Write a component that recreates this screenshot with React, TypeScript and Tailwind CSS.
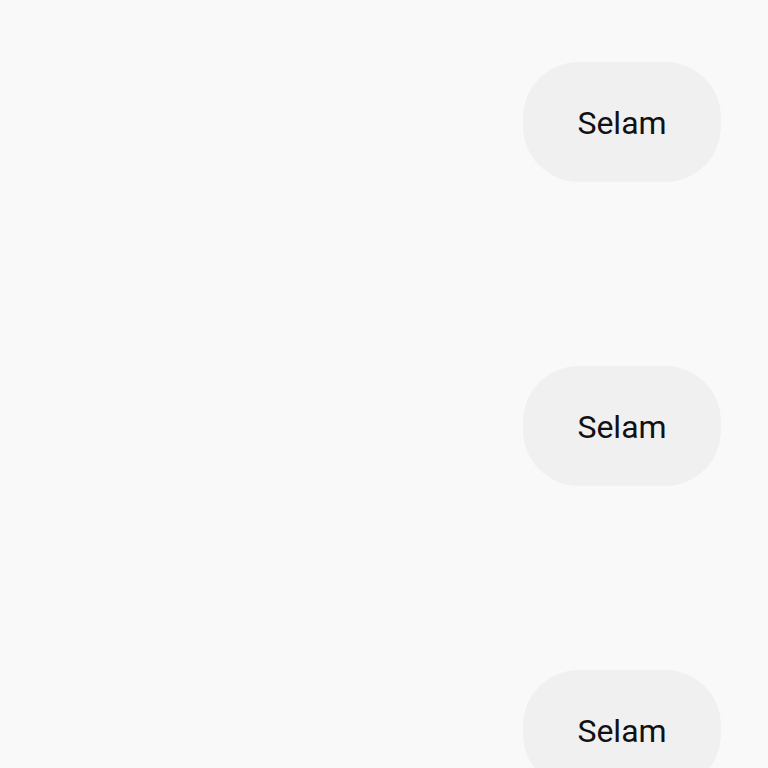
const messages = ['Selam', 'Selam', 'Selam']

const Bubble = ({ text }: { text: string }) => (
    <div className="flex h-[120px] w-[198px] items-center justify-center rounded-[56px] bg-[#f0f0f0]">
        <span className="pt-[2px] text-[32px] text-[#111111]" style={{ fontFamily: 'Roboto, "Noto Sans", sans-serif' }}>
            {text}
        </span>
    </div>
)

export default function App() {
    return (
        <div className="h-[768px] w-[768px] overflow-hidden bg-[#f9f9f9]">
            <div className="flex flex-col items-end gap-[184px] pr-[47px] pt-[62px]">
                {messages.map((m, i) => (
                    <Bubble key={i} text={m} />
                ))}
            </div>
        </div>
    )
}
